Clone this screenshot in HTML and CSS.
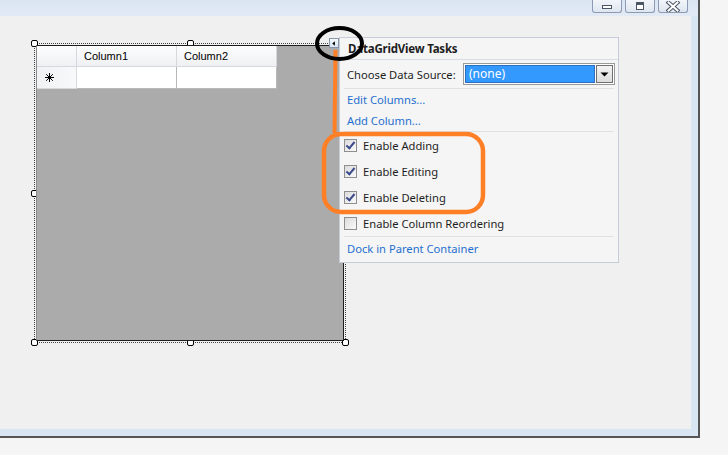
FILE: index.html
```html
<!DOCTYPE html>
<html lang="en">
  <head>
    <meta charset="UTF-8" />
    <title>DataGridView Tasks</title>
    <link rel="stylesheet" href="styles.css">
  </head>
  <body>
    <div class="window">
      <!-- Title bar with caption buttons -->
      <div class="titlebar">
        <div class="cap-btn">
          <svg width="12" height="8" viewBox="0 0 12 8"><rect x="1.5" y="3.5" width="9" height="3" fill="#fff" stroke="#4b5563"/></svg>
        </div>
        <div class="cap-btn">
          <svg width="12" height="10" viewBox="0 0 12 10"><rect x="2.5" y="1.5" width="7" height="7" fill="#fff" stroke="#4b5563"/><rect x="3" y="2" width="6" height="2" fill="#4b5563"/></svg>
        </div>
        <div class="cap-btn">
          <svg width="16" height="11" viewBox="0 0 16 11"><path d="M3.5 1.5 L12.5 9.5 M12.5 1.5 L3.5 9.5" stroke="#4b5563" stroke-width="4" stroke-linecap="square"/><path d="M3.5 1.5 L12.5 9.5 M12.5 1.5 L3.5 9.5" stroke="#fff" stroke-width="2" stroke-linecap="square"/></svg>
        </div>
      </div>

      <!-- Form design surface -->
      <div class="client">
        <div class="selection">
          <span class="handle h-tl"></span>
          <span class="handle h-tm"></span>
          <span class="handle h-tr"></span>
          <span class="handle h-ml"></span>
          <span class="handle h-mr"></span>
          <span class="handle h-bl"></span>
          <span class="handle h-bm"></span>
          <span class="handle h-br"></span>
        </div>

        <div class="dgv">
          <div class="dgv-grid">
            <div class="hdr corner"></div>
            <div class="hdr">Column1</div>
            <div class="hdr">Column2</div>
            <div class="row-hdr">
              <svg width="9" height="9" viewBox="0 0 9 9"><path d="M4.5 0 V9 M0 4.5 H9 M1.2 1.2 L7.8 7.8 M7.8 1.2 L1.2 7.8" stroke="#000" stroke-width="1"/></svg>
            </div>
            <div class="cell"></div>
            <div class="cell"></div>
          </div>
        </div>

        <div class="smart-tag">
          <svg width="9" height="9" viewBox="0 0 9 9"><path d="M5.5 2 L2.5 4.5 L5.5 7 Z" fill="#000"/></svg>
        </div>

        <!-- DataGridView Tasks panel -->
        <div class="tasks">
          <div class="tasks-title">DataGridView Tasks</div>
          <div class="tasks-row source">
            <span>Choose Data Source:</span>
            <div class="combo">
              <div class="combo-value">(none)</div>
              <div class="combo-btn">
                <svg width="9" height="5" viewBox="0 0 9 5"><path d="M0.5 0.5 L8.5 0.5 L4.5 4.5 Z" fill="#000"/></svg>
              </div>
            </div>
          </div>
          <div class="sep"></div>
          <div class="tasks-row link">Edit Columns...</div>
          <div class="tasks-row link">Add Column...</div>
          <div class="sep"></div>
          <div class="tasks-row check"><span class="box checked"></span>Enable Adding</div>
          <div class="tasks-row check"><span class="box checked"></span>Enable Editing</div>
          <div class="tasks-row check"><span class="box checked"></span>Enable Deleting</div>
          <div class="tasks-row check"><span class="box"></span>Enable Column Reordering</div>
          <div class="sep"></div>
          <div class="tasks-row link dock">Dock in Parent Container</div>
        </div>
      </div>
    </div>

    <!-- hand-drawn annotations -->
    <svg class="marks" width="728" height="455" viewBox="0 0 728 455">
      <path d="M335.5 50 L334.5 133" stroke="#ff7f27" stroke-width="4" fill="none"/>
      <rect x="324" y="134" width="159" height="78" rx="17" ry="17" stroke="#ff7f27" stroke-width="4.5" fill="none"/>
      <ellipse cx="339.5" cy="43.5" rx="22.5" ry="15.5" stroke="#000" stroke-width="4" fill="none"/>
    </svg>
  </body>
</html>
```

FILE: styles.css
```css
body {
  margin: 0;
  width: 728px;
  height: 455px;
  overflow: hidden;
  background-color: #f5f5f5;
  font-family: 'Noto Sans', sans-serif;
  position: relative;
}
.window {
  width: 698px;
  height: 436px;
  display: flex;
  flex-direction: column;
  background-color: #d8e5f3;
  border-right: 2px solid #555;
  border-bottom: 2px solid #555;
}
.titlebar {
  height: 16px;
  flex: none;
  display: flex;
  justify-content: flex-end;
  gap: 3px;
  padding-right: 10px;
  background: linear-gradient(#dae5f2, #e2eaf5);
}
.cap-btn {
  width: 28px;
  height: 12px;
  border: 1px solid #8c9bb3;
  border-top: none;
  border-radius: 0 0 3px 3px;
  background: linear-gradient(#f2f5fa, #dfe6f0);
  display: flex;
  align-items: center;
  justify-content: center;
}
.client {
  flex: 1;
  margin: 0 7px 7px 0;
  background-color: #f0f0f0;
  position: relative;
}

/* selection frame + grips */
.selection {
  position: absolute;
  left: 34px;
  top: 27px;
  width: 310px;
  height: 298px;
  border: 1px dotted #444;
}
.handle {
  position: absolute;
  width: 5px;
  height: 5px;
  background-color: #fff;
  border: 1px solid #000;
  border-radius: 2px;
}
.h-tl { left: -4px; top: -4px; }
.h-tm { left: 152px; top: -4px; }
.h-tr { right: -4px; top: -4px; }
.h-ml { left: -4px; top: 146px; }
.h-mr { right: -4px; top: 146px; }
.h-bl { left: -4px; bottom: -4px; }
.h-bm { left: 152px; bottom: -4px; }
.h-br { right: -4px; bottom: -4px; }

.dgv {
  position: absolute;
  left: 36px;
  top: 29px;
  width: 306px;
  height: 294px;
  background-color: #ababab;
  border: 1px solid #1e1e1e;
  border-left-color: #8a8a8a;
}
.dgv-grid {
  display: grid;
  grid-template-columns: 40px 100px 100px;
  grid-template-rows: 21px 22px;
  width: 240px;
  font-family: 'Liberation Sans', Arial, sans-serif;
  font-size: 11px;
  color: #000;
}
.hdr {
  background: linear-gradient(#fdfdfd, #eef0f3);
  border-right: 1px solid #d6d8dc;
  border-bottom: 1px solid #d6d8dc;
  padding-left: 7px;
  line-height: 20px;
}
.hdr.corner {
  padding-left: 0;
}
.row-hdr {
  background: linear-gradient(90deg, #f0f1f3, #f8f9fa);
  border-right: 1px solid #d6d8dc;
  border-bottom: 1px solid #d6d8dc;
  display: flex;
  align-items: center;
  padding-left: 8px;
}
.cell {
  background-color: #fff;
  border-right: 1px solid #b8b8b8;
  border-bottom: 1px solid #b8b8b8;
}

.smart-tag {
  position: absolute;
  left: 329px;
  top: 22px;
  width: 8px;
  height: 8px;
  border: 1px solid #8a96a8;
  background: linear-gradient(#f4f8fd, #d9e5f3);
  display: flex;
  align-items: center;
  justify-content: center;
}

/* tasks panel */
.tasks {
  position: absolute;
  left: 339px;
  top: 21px;
  width: 278px;
  height: 224px;
  background-color: #f5f5f5;
  border: 1px solid #c6cdd9;
  font-size: 11.2px;
  color: #1e1e1e;
  display: flex;
  flex-direction: column;
  white-space: nowrap;
}
.tasks-title {
  height: 21px;
  line-height: 21px;
  padding-left: 8px;
  font-weight: bold;
  font-size: 11.5px;
  letter-spacing: -0.2px;
  border-bottom: 1px solid #d8dce4;
}
.tasks-row {
  display: flex;
  align-items: center;
  padding-left: 7px;
  height: 26px;
}
.tasks-row.check {
  padding-left: 4px;
}
.tasks-row.source {
  height: 28px;
  justify-content: space-between;
  padding-right: 3px;
}
.tasks-row.link {
  color: #1f6fce;
  height: 21px;
}
.tasks-row.dock {
  height: 23px;
}
.sep {
  height: 1px;
  margin: 0 4px;
  background-color: #e1e1e1;
}
.combo {
  width: 148px;
  height: 18px;
  border: 1px solid #9a9a9a;
  display: flex;
  padding: 1px;
  background-color: #fff;
}
.combo-value {
  flex: 1;
  background-color: #3399ff;
  border: 1px solid #2a6fc0;
  color: #fff;
  padding-left: 3px;
  line-height: 16px;
  font-size: 12px;
}
.combo-btn {
  width: 15px;
  margin-left: 1px;
  border: 1px solid #707070;
  background: linear-gradient(#f3f3f3, #dcdcdc);
  display: flex;
  align-items: center;
  justify-content: center;
}
.box {
  width: 11px;
  height: 11px;
  border: 1px solid #8f8f8f;
  background: linear-gradient(135deg, #dcdcdc, #fafafa);
  margin-right: 6px;
  flex: none;
  position: relative;
}
.box.checked::after {
  content: '';
  position: absolute;
  left: 3px;
  top: 0px;
  width: 3px;
  height: 7px;
  border-right: 2px solid #3b4a8c;
  border-bottom: 2px solid #3b4a8c;
  transform: rotate(40deg);
}

.marks {
  position: absolute;
  left: 0;
  top: 0;
  pointer-events: none;
}
```
